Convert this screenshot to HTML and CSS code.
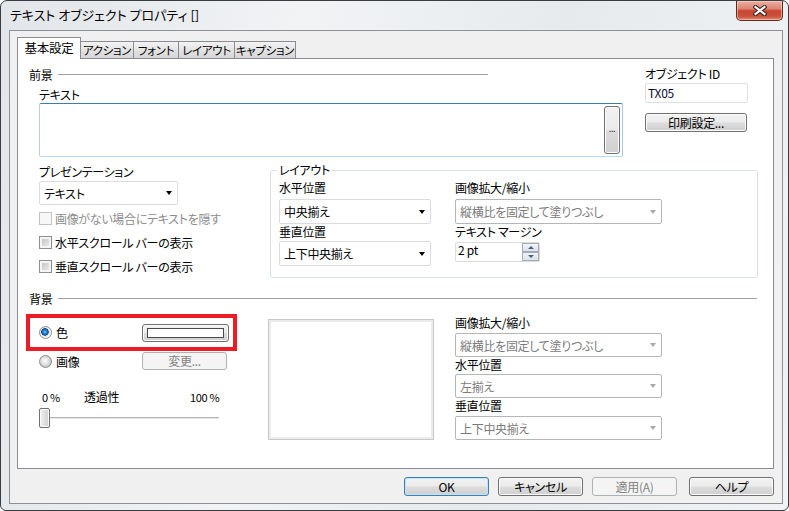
FILE: index.html
```html
<!DOCTYPE html>
<html lang="ja">
<head>
  <meta charset="UTF-8" />
  <title>テキスト オブジェクト プロパティ</title>
  <link rel="stylesheet" href="styles.css">
</head>
<body>

<div class="window">
  <div class="titlebar">
    <span class="title">テキスト オブジェクト プロパティ []</span>
    <div class="close">
      <svg width="14" height="11" viewBox="0 0 14 11">
        <path d="M2.5 2 L11.5 9 M11.5 2 L2.5 9" stroke="#3d2420" stroke-width="4.2" stroke-linecap="square" fill="none"/>
        <path d="M2.5 2 L11.5 9 M11.5 2 L2.5 9" stroke="#fff" stroke-width="2.2" stroke-linecap="square" fill="none"/>
      </svg>
    </div>
  </div>

  <div class="client">
    <div class="tabs">
      <div class="tab active">基本設定</div>
      <div class="tab">アクション</div>
      <div class="tab">フォント</div>
      <div class="tab">レイアウト</div>
      <div class="tab">キャプション</div>
    </div>

    <div class="panel">
      <!-- foreground -->
      <div class="fg">
        <div class="fg-left">
          <div class="section-title short"><span>前景</span><i></i></div>
          <div class="label ind">テキスト</div>
          <div class="textbox">
            <div class="btn dots">...</div>
          </div>
        </div>
        <div class="fg-right">
          <div class="label">オブジェクト ID</div>
          <div class="input">TX05</div>
          <div class="btn print">印刷設定...</div>
        </div>
      </div>

      <div class="row-b">
        <div class="pres">
          <div class="label">プレゼンテーション</div>
          <div class="combo pres-combo">テキスト<b class="arrow"></b></div>
          <div class="check disabled first"><span class="box"></span>画像がない場合にテキストを隠す</div>
          <div class="check"><span class="box"></span>水平スクロール バーの表示</div>
          <div class="check"><span class="box"></span>垂直スクロール バーの表示</div>
        </div>

        <fieldset class="layout">
          <legend>レイアウト</legend>
          <div class="layout-cols">
            <div class="col col-a">
              <div class="label">水平位置</div>
              <div class="combo tall first">中央揃え<b class="arrow"></b></div>
              <div class="label">垂直位置</div>
              <div class="combo tall">上下中央揃え<b class="arrow"></b></div>
            </div>
            <div class="col col-b">
              <div class="label">画像拡大/縮小</div>
              <div class="combo tall first dis">縦横比を固定して塗りつぶし<b class="arrow"></b></div>
              <div class="label">テキスト マージン</div>
              <div class="spin">
                <span class="spin-val">2 pt</span>
                <span class="spin-btns">
                  <span class="sb up"><b></b></span>
                  <span class="sb down"><b></b></span>
                </span>
              </div>
            </div>
          </div>
        </fieldset>
      </div>

      <!-- background -->
      <div class="section-title wide"><span>背景</span><i></i></div>

      <div class="row-c">
        <div class="bg-left">
          <div class="redbox">
            <div class="radio-label"><span class="radio on"></span>色</div>
            <div class="btn swatch-btn"><span class="swatch"></span></div>
          </div>
          <div class="radio-row">
            <div class="radio-label"><span class="radio"></span>画像</div>
            <div class="btn disabled change">変更...</div>
          </div>
          <div class="pct">
            <span class="p0">0 %</span>
            <span class="pname">透過性</span>
            <span class="p100">100 %</span>
          </div>
          <div class="slider">
            <span class="thumb"></span>
            <span class="track"></span>
          </div>
        </div>

        <div class="preview"></div>

        <div class="bg-right">
          <div class="label">画像拡大/縮小</div>
          <div class="combo dis m2">縦横比を固定して塗りつぶし<b class="arrow"></b></div>
          <div class="label">水平位置</div>
          <div class="combo dis m1">左揃え<b class="arrow"></b></div>
          <div class="label">垂直位置</div>
          <div class="combo dis m2">上下中央揃え<b class="arrow"></b></div>
        </div>
      </div>
    </div>

    <div class="buttons">
      <div class="btn default">OK</div>
      <div class="btn">キャンセル</div>
      <div class="btn disabled">適用(A)</div>
      <div class="btn help">ヘルプ</div>
    </div>
  </div>
</div>

</body>
</html>
```

FILE: styles.css
```css
* {
  box-sizing: border-box;
}

body {
  margin: 0;
  background: #fff;
  font-family: "Noto Sans CJK JP", "Noto Sans", sans-serif;
  font-size: 12px;
  font-feature-settings: "palt";
  color: #000;
}

.window {
  width: 789px;
  height: 511px;
  border: 1px solid #3a3d40;
  border-radius: 7px 7px 6px 6px;
  background: linear-gradient(100deg, #e2e5e9 0%, #f1f3f5 35%, #e7eaed 65%, #f0f2f4 100%);
  display: flex;
  flex-direction: column;
  overflow: hidden;
}

.titlebar {
  height: 29px;
  display: flex;
  align-items: flex-start;
  padding-left: 9px;
}

.title {
  line-height: 28px;
  font-size: 13px;
}

.close {
  margin-left: auto;
  margin-right: 5px;
  width: 47px;
  height: 20px;
  border: 1px solid #5c2a22;
  border-top: none;
  border-radius: 0 0 5px 5px;
  background: linear-gradient(#eab1a4 0%, #dc8572 40%, #c84632 52%, #c9503b 80%, #e58a6f 100%);
  box-shadow: inset 0 0 0 1px rgba(255, 220, 210, 0.55);
  display: flex;
  align-items: center;
  justify-content: center;
}

.client {
  flex: 1;
  margin: 0 5px 6px 8px;
  border: 1px solid #8e9297;
  background: #f0f0f0;
  padding: 6px 0 0 7px;
  letter-spacing: -0.3px;
}

/* tabs */
.tabs {
  display: flex;
  align-items: flex-end;
  height: 22px;
  margin-bottom: -1px;
  position: relative;
  z-index: 1;
}

.tab {
  height: 17px;
  margin-bottom: 1px;
  margin-left: -1px;
  border: 1px solid #898c95;
  border-bottom: none;
  background: linear-gradient(#f3f3f3, #e3e3e3 50%, #d6d6d6);
  font-size: 11.5px;
  line-height: 16px;
  text-align: center;
  white-space: nowrap;
}

.tab.active {
  height: 22px;
  margin-bottom: 0;
  margin-left: 0;
  background: #fff;
  font-size: 12.5px;
  line-height: 20px;
  position: relative;
  z-index: 2;
}

.tab:nth-child(1) { width: 64px; }
.tab:nth-child(2) { width: 54px; }
.tab:nth-child(3) { width: 46px; }
.tab:nth-child(4) { width: 57px; }
.tab:nth-child(5) { width: 62px; }

.panel {
  width: 757px;
  height: 411px;
  border: 1px solid #898c95;
  background: #fff;
}

.label {
  height: 16px;
  line-height: 16px;
  white-space: nowrap;
}

.ind {
  margin-left: 10px;
}

.section-title {
  display: flex;
  align-items: center;
  height: 16px;
  gap: 6px;
}

.section-title i {
  flex: 1;
  height: 1px;
  background: #a0a0a0;
}

.section-title.short {
  width: 459px;
}

.section-title.wide {
  width: 728px;
  margin: 12px 0 0 11px;
}

/* foreground */
.fg {
  display: flex;
  margin: 7px 0 0 11px;
}

.fg-left {
  width: 594px;
}

.label.ind {
  margin-top: 5px;
}

.textbox {
  margin-left: 10px;
  width: 584px;
  height: 54px;
  border: 1px solid;
  border-color: #3d7bad #a4c9e3 #b7d9ed #b5cfe7;
  border-radius: 2px;
  display: flex;
  align-items: center;
  justify-content: flex-end;
  padding-right: 2px;
}

.fg-right {
  margin-left: 22px;
  width: 103px;
}

.input {
  margin-top: 1px;
  height: 20px;
  border: 1px solid #dde1e6;
  border-radius: 2px;
  padding-left: 2px;
  line-height: 18px;
  color: #0a0a30;
}

/* buttons */
.btn {
  height: 19px;
  border: 1px solid #707070;
  border-radius: 3px;
  background: linear-gradient(#f2f2f2 0%, #ebebeb 48%, #dddddd 52%, #cfcfcf 100%);
  box-shadow: inset 0 0 0 1px #fbfbfb;
  line-height: 17px;
  text-align: center;
  white-space: nowrap;
}

.btn.default {
  border-color: #3c7fb1;
  box-shadow: inset 0 0 0 1px #bfe3f8;
}

.btn.disabled {
  border-color: #adb2b5;
  background: #f4f4f4;
  box-shadow: none;
  color: #838383;
}

.print {
  margin-top: 10px;
  width: 102px;
}

.dots {
  width: 16px;
  height: 48px;
  font-size: 9px;
  line-height: 44px;
  color: #333;
}

/* presentation + layout */
.row-b {
  display: flex;
  margin: 5px 0 0 21px;
}

.pres {
  width: 231px;
  padding-top: 2px;
}

.combo {
  display: flex;
  align-items: center;
  justify-content: space-between;
  height: 24px;
  padding: 0 5px 0 4px;
  border: 1px solid #d9dce0;
  border-radius: 2px;
  background: #fff;
  white-space: nowrap;
}

.combo .arrow {
  width: 0;
  height: 0;
  border-left: 3.5px solid transparent;
  border-right: 3.5px solid transparent;
  border-top: 4px solid #000;
}

.combo.dis {
  border-color: #b4b7ba;
  color: #7a7a7a;
}

.combo.dis .arrow {
  border-top-color: #a8a8a8;
}

.pres-combo {
  margin-top: 1px;
  width: 139px;
}

.check {
  display: flex;
  align-items: center;
  gap: 3px;
  height: 24px;
  white-space: nowrap;
}

.check.first {
  margin-top: 1px;
}

.check .box {
  width: 13px;
  height: 13px;
  border: 1px solid #8e8f8f;
  background: linear-gradient(135deg, #b9bdc1, #f2f2f2);
  box-shadow: inset 0 0 0 2px #f4f4f4;
}

.check.disabled {
  color: #8d8d8d;
}

.check.disabled .box {
  border-color: #c3c3c3;
  background: #f7f7f7;
  box-shadow: none;
}

.layout {
  width: 488px;
  margin: 0;
  padding: 2px 0 6px 8px;
  border: 1px solid #d5dfe5;
  border-radius: 3px;
}

.layout legend {
  padding: 0 2px;
  margin-left: -2px;
  line-height: 16px;
}

.layout-cols {
  display: flex;
  gap: 24px;
}

.col-a {
  width: 152px;
}

.col-b {
  width: 207px;
}

.combo.tall {
  height: 25px;
  margin-top: 1px;
}

.combo.tall.first {
  margin-top: 3px;
}

.spin {
  margin-top: 2px;
  width: 85px;
  height: 20px;
  display: flex;
  border: 1px solid #d9dce0;
  border-radius: 2px;
}

.spin-val {
  flex: 1;
  padding-left: 2px;
  line-height: 14px;
}

.spin-btns {
  width: 17px;
  display: flex;
  flex-direction: column;
}

.sb {
  flex: 1;
  border: 1px solid #a5acb5;
  background: linear-gradient(#f2f5f8, #dbe2ea);
  display: flex;
  align-items: center;
  justify-content: center;
}

.sb b {
  width: 0;
  height: 0;
  border-left: 3px solid transparent;
  border-right: 3px solid transparent;
}

.sb.up b {
  border-bottom: 3px solid #4a5f7f;
}

.sb.down b {
  border-top: 3px solid #4a5f7f;
}

/* background */
.row-c {
  display: flex;
  margin-left: 8px;
}

.bg-left {
  width: 242px;
}

.redbox {
  margin-top: 8px;
  width: 211px;
  height: 37px;
  border: 4px solid #ed1c24;
  display: flex;
  align-items: center;
  justify-content: space-between;
  padding: 0 4px 0 9px;
}

.radio-label {
  display: flex;
  align-items: center;
  gap: 4px;
}

.radio {
  width: 13px;
  height: 13px;
  border-radius: 50%;
  border: 1px solid #8e8f8f;
  background: radial-gradient(circle at 45% 45%, #fdfdfd 0, #e8e8e8 3px, #c6c6c6 6px);
}

.radio.on {
  background: radial-gradient(circle at 45% 45%, #8fd3ff 0, #2a86d6 1.5px, #0c4f92 3.5px, #e3e3e3 4px, #fafafa 6px);
}

.swatch-btn {
  width: 87px;
  height: 18px;
  padding: 3px 4px;
}

.swatch {
  display: block;
  height: 100%;
  border: 1px solid #4a4a4a;
  background: #fff;
}

.radio-row {
  margin-top: 1px;
  width: 201px;
  height: 18px;
  padding-left: 13px;
  display: flex;
  align-items: center;
  justify-content: space-between;
}

.change {
  width: 85px;
  height: 18px;
  line-height: 16px;
}

.pct {
  margin-top: 19px;
  height: 16px;
  line-height: 16px;
  display: flex;
  padding-left: 16px;
  font-size: 11px;
}

.p0 { width: 42px; }
.pname { width: 106px; font-size: 12px; }

.slider {
  margin: 3px 0 0 13px;
  width: 180px;
  height: 20px;
  display: flex;
  align-items: center;
}

.thumb {
  width: 11px;
  height: 20px;
  border: 1px solid #707070;
  border-radius: 2px;
  background: linear-gradient(90deg, #f2f2f2, #e0e0e0 50%, #cfcfcf);
  box-shadow: inset 0 0 0 1px #fbfbfb;
}

.track {
  flex: 1;
  height: 2px;
  border-top: 1px solid #b4b4b4;
  border-bottom: 1px solid #e8e8e8;
}

.preview {
  margin-top: 13px;
  width: 166px;
  height: 121px;
  border: 1px solid #c8c8c8;
  box-shadow: inset 0 0 0 2px #ececec;
}

.bg-right {
  margin-left: 21px;
  width: 207px;
  padding-top: 9px;
}

.combo.m2 {
  margin-top: 2px;
}

.combo.m1 {
  margin-top: 1px;
}

/* bottom buttons */
.buttons {
  display: flex;
  justify-content: flex-end;
  margin-top: 8px;
  padding-right: 8px;
  gap: 9px;
}

.buttons .btn {
  width: 85px;
}

.buttons .help {
  margin-left: 3px;
}
```
